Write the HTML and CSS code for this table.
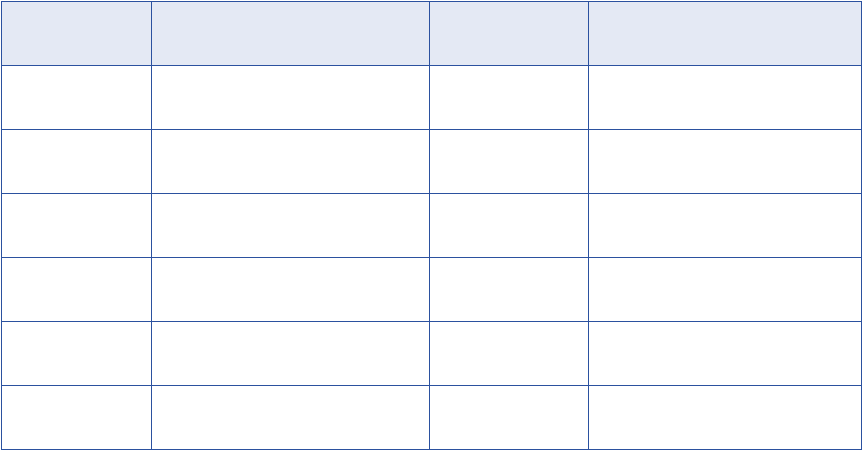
FILE: index.html
```html
<!DOCTYPE html>
<html>
<head>
<meta charset="utf-8">
<link rel="stylesheet" href="styles.css">
</head>
<body>
<table class="grid">
<thead>
<tr><th class="c1"></th><th class="c2"></th><th class="c3"></th><th class="c4"></th></tr>
</thead>
<tbody>
<tr><td></td><td></td><td></td><td></td></tr>
<tr><td></td><td></td><td></td><td></td></tr>
<tr><td></td><td></td><td></td><td></td></tr>
<tr><td></td><td></td><td></td><td></td></tr>
<tr><td></td><td></td><td></td><td></td></tr>
<tr><td></td><td></td><td></td><td></td></tr>
</tbody>
</table>
</body>
</html>
```
FILE: styles.css
```css
html, body {
  margin: 0;
  padding: 0;
  background: #ffffff;
  font-family: "Liberation Sans", Arial, sans-serif;
}
body {
  padding: 1px 0 0 1px;
}
.grid {
  border-collapse: separate;
  border-spacing: 0;
  border-left: 1px solid #2b519f;
  border-top: 1px solid #2b519f;
  table-layout: fixed;
}
.grid th,
.grid td {
  padding: 0;
  height: 63px;
  border-right: 1px solid #2b519f;
  border-bottom: 1px solid #2b519f;
}
.grid th {
  background: #e4e9f4;
}
.c1 { width: 149px; }
.c2 { width: 277px; }
.c3 { width: 158px; }
.c4 { width: 272px; }
```
